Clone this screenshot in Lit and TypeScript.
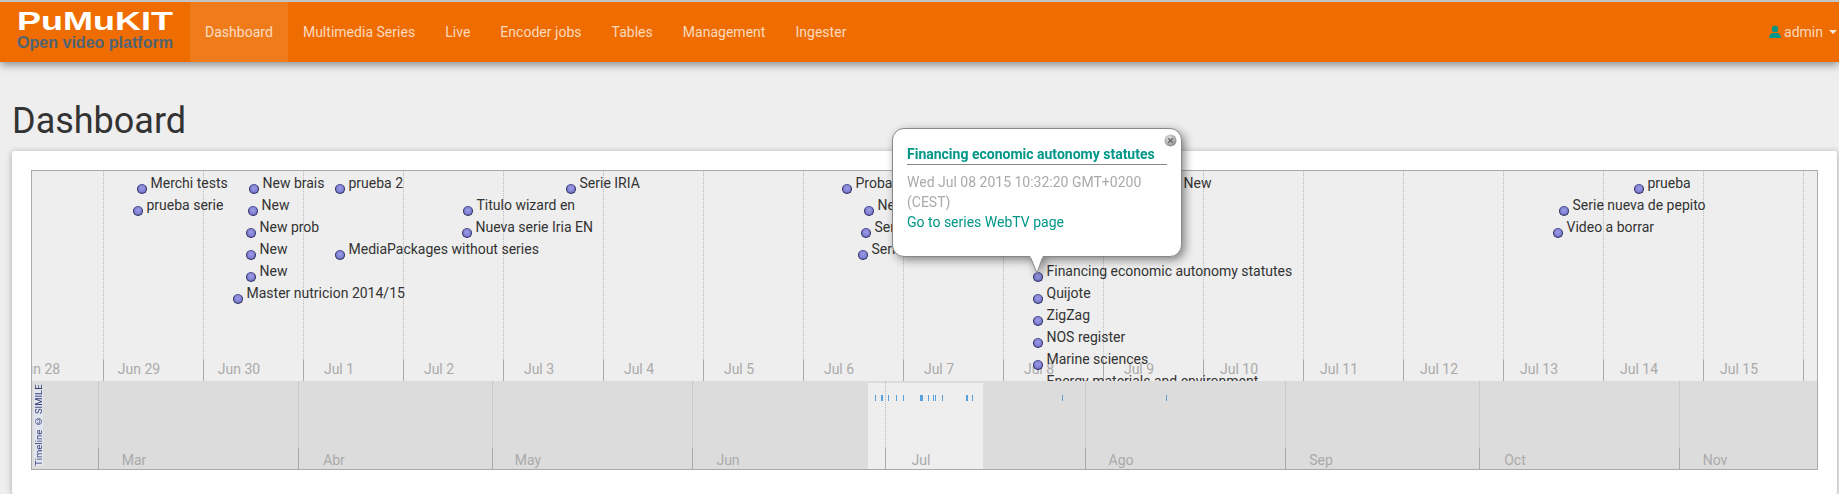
import { LitElement, html, css } from 'lit';
import { customElement } from 'lit/decorators.js';

// timeline inner box starts here on the page, all data below is in page coords
const ORIGIN_X = 32;
const ORIGIN_Y = 171;
const ROW_H = 22;

const navItems = ['Dashboard', 'Multimedia Series', 'Live', 'Encoder jobs', 'Tables', 'Management', 'Ingester'];

const days = ['Jun 28', 'Jun 29', 'Jun 30', 'Jul 1', 'Jul 2', 'Jul 3', 'Jul 4', 'Jul 5', 'Jul 6', 'Jul 7', 'Jul 8', 'Jul 9', 'Jul 10', 'Jul 11', 'Jul 12', 'Jul 13', 'Jul 14', 'Jul 15', ''];

const months = [
  { x: 98, label: 'Mar' },
  { x: 298, label: 'Abr' },
  { x: 492, label: 'May' },
  { x: 692, label: 'Jun' },
  { x: 885, label: 'Jul' },
  { x: 1085, label: 'Ago' },
  { x: 1285, label: 'Sep' },
  { x: 1479, label: 'Oct' },
  { x: 1679, label: 'Nov' },
];

const events = [
  { x: 142, r: 0, t: 'Merchi tests' },
  { x: 138, r: 1, t: 'prueba serie' },
  { x: 254, r: 0, t: 'New brais' },
  { x: 253, r: 1, t: 'New' },
  { x: 251, r: 2, t: 'New prob' },
  { x: 251, r: 3, t: 'New' },
  { x: 251, r: 4, t: 'New' },
  { x: 238, r: 5, t: 'Master nutricion 2014/15' },
  { x: 340, r: 0, t: 'prueba 2' },
  { x: 340, r: 3, t: 'MediaPackages without series' },
  { x: 468, r: 1, t: 'Titulo wizard en' },
  { x: 467, r: 2, t: 'Nueva serie Iria EN' },
  { x: 571, r: 0, t: 'Serie IRIA' },
  { x: 847, r: 0, t: 'Probando' },
  { x: 869, r: 1, t: 'New' },
  { x: 866, r: 2, t: 'Serie' },
  { x: 863, r: 3, t: 'Serie' },
  { x: 1175, r: 0, t: 'New' },
  { x: 1038, r: 4, t: 'Financing economic autonomy statutes' },
  { x: 1038, r: 5, t: 'Quijote' },
  { x: 1038, r: 6, t: 'ZigZag' },
  { x: 1038, r: 7, t: 'NOS register' },
  { x: 1038, r: 8, t: 'Marine sciences' },
  { x: 1038, r: 9, t: 'Energy materials and environment' },
  { x: 1639, r: 0, t: 'prueba' },
  { x: 1564, r: 1, t: 'Serie nueva de pepito' },
  { x: 1558, r: 2, t: 'Video a borrar' },
];

const marks = [
  { x: 875, w: 1 }, { x: 881, w: 2 }, { x: 888, w: 1 }, { x: 896, w: 1 }, { x: 903, w: 1 },
  { x: 920, w: 3 }, { x: 928, w: 1 }, { x: 933, w: 1 }, { x: 935, w: 1 }, { x: 942, w: 1 },
  { x: 966, w: 2 }, { x: 972, w: 1 }, { x: 1062, w: 1 }, { x: 1166, w: 1 },
];

@customElement('app-root')
export class AppRoot extends LitElement {
  static styles = css`
    :host {
      display: block;
      height: 494px;
      overflow: hidden;
      background: #eee;
      font-family: Roboto, sans-serif;
      font-size: 14px;
      line-height: 20px;
      color: #333;
    }

    .navbar {
      display: flex;
      height: 60px;
      border-top: 2px solid #c4c4c4;
      background: #ef6c00;
      box-shadow: 0 3px 8px rgba(0, 0, 0, 0.4);
      position: relative;
      z-index: 2;
    }

    .brand {
      width: 190px;
      box-sizing: border-box;
      padding: 8px 0 0 17px;
    }

    .brand svg {
      display: block;
    }

    .wordmark {
      font-family: "Liberation Sans", sans-serif;
      font-weight: 700;
      font-size: 25px;
      fill: #fff;
    }

    .tagline {
      font-family: "Liberation Sans", sans-serif;
      font-weight: 700;
      font-size: 16px;
      fill: #4f6475;
    }

    .nav-links {
      display: flex;
      letter-spacing: 0.02px;
    }

    .nav-link {
      padding: 20px 15px;
      color: rgba(255, 255, 255, 0.75);
    }

    .nav-link.active {
      background: rgba(255, 255, 255, 0.1);
    }

    .user {
      margin-left: auto;
      display: flex;
      align-items: center;
      gap: 2px;
      height: 60px;
      padding-right: 2px;
      color: rgba(255, 255, 255, 0.75);
    }

    .caret {
      width: 0;
      height: 0;
      margin-left: 4px;
      border-left: 4px solid transparent;
      border-right: 4px solid transparent;
      border-top: 4px solid rgba(255, 255, 255, 0.85);
    }

    .page {
      padding: 0 2px 0 12px;
    }

    h1 {
      margin: 0;
      padding: 39px 0 0;
      height: 50px;
      font-size: 36px;
      line-height: 40px;
      font-weight: 400;
      color: #333;
    }

    .card {
      background: #fff;
      padding: 19px 19px 24px;
      border-radius: 2px;
      box-shadow: 0 1px 6px rgba(0, 0, 0, 0.3);
    }

    .timeline-wrap {
      position: relative;
      width: 1787px;
    }

    .timeline {
      border: 1px solid #aaa;
      overflow: hidden;
    }

    .band {
      position: relative;
      overflow: hidden;
    }

    .band-top {
      height: 210px;
      background: #eee;
    }

    .band-bottom {
      height: 88px;
      background: #dcdcdc;
    }

    .grid-line {
      position: absolute;
      top: 0;
      bottom: 21px;
      border-left: 1px dotted #bbb;
    }

    .tick {
      position: absolute;
      bottom: 0;
      height: 21px;
      border-left: 1px solid #aaa;
    }

    .band-label {
      position: absolute;
      width: 72px;
      text-align: center;
      color: #aaa;
      white-space: nowrap;
    }

    .band-top .band-label {
      top: 188px;
    }

    .band-bottom .band-label {
      top: 69px;
    }

    .event {
      position: absolute;
      display: flex;
      align-items: flex-start;
      gap: 3.5px;
      white-space: nowrap;
    }

    .dot {
      box-sizing: border-box;
      width: 10px;
      height: 10px;
      margin-top: 11px;
      border-radius: 50%;
      border: 1px solid #2c2c62;
      border-top-color: #555596;
      background: radial-gradient(circle at 50% 40%, #9c9ce6 0, #8282d6 55%, #4c4c9c 100%);
    }

    .highlight {
      position: absolute;
      left: 836px;
      top: 2px;
      bottom: 0;
      width: 115px;
      background: #eee;
    }

    .mark {
      position: absolute;
      top: 14px;
      height: 6px;
      background: #58a0dc;
    }

    .credit {
      position: absolute;
      left: 2px;
      top: 9px;
      height: 76px;
      width: 9px;
      writing-mode: vertical-rl;
      transform: rotate(180deg);
      font-size: 9.5px;
      line-height: 9px;
      text-align: center;
      white-space: nowrap;
      color: #33407a;
      background: rgba(230, 232, 245, 0.7);
    }

    .popup {
      position: absolute;
      left: 861px;
      top: -42px;
      width: 290px;
      height: 129px;
      box-sizing: border-box;
      padding: 15px 14px 0;
      background: #fff;
      border: 1px solid #888;
      border-radius: 12px;
      filter: drop-shadow(3px 3px 5px rgba(0, 0, 0, 0.45));
    }

    .popup-title {
      margin: 0;
      border-bottom: 1px solid #888;
      font-size: 14px;
      font-weight: 700;
      line-height: 20px;
      color: #009688;
      white-space: nowrap;
    }

    .popup-body {
      margin-top: 7px;
      color: #aaa;
    }

    .popup-link {
      color: #009688;
    }

    .popup-close {
      position: absolute;
      right: 4px;
      top: 5px;
    }

    .popup-arrow {
      position: absolute;
      left: 136px;
      top: 126px;
    }
  `;

  render() {
    return html`
      <header class="navbar">
        <div class="brand">
          <svg width="160" height="44" viewBox="0 0 160 44">
            <text class="wordmark" x="0" y="20" textLength="156" lengthAdjust="spacingAndGlyphs">PuMuKIT</text>
            <text class="tagline" x="0" y="38" textLength="156" lengthAdjust="spacingAndGlyphs">Open video platform</text>
          </svg>
        </div>
        <nav class="nav-links">
          ${navItems.map((item, i) => html`<div class="nav-link ${i === 0 ? 'active' : ''}">${item}</div>`)}
        </nav>
        <div class="user">
          <svg width="14" height="14" viewBox="0 0 14 14">
            <circle cx="7" cy="4" r="3.2" fill="#009688"></circle>
            <path d="M1 13c0-3 2-5 4-5h4c2 0 4 2 4 5z" fill="#009688"></path>
          </svg>
          admin
          <span class="caret"></span>
        </div>
      </header>

      <main class="page">
        <h1>Dashboard</h1>
        <section class="card">
          <div class="timeline-wrap">
            <div class="timeline">
              <div class="band band-top">
                ${days.map((d, i) => {
                  const x = 3 + i * 100 - ORIGIN_X;
                  return html`
                    <div class="grid-line" style="left:${x}px"></div>
                    <div class="tick" style="left:${x}px"></div>
                    <div class="band-label" style="left:${x}px">${d}</div>
                  `;
                })}
                ${events.map((e) => html`
                  <div class="event" style="left:${e.x - 5 - ORIGIN_X}px;top:${189 + e.r * ROW_H - 16 - ORIGIN_Y}px">
                    <span class="dot"></span><span>${e.t}</span>
                  </div>
                `)}
              </div>
              <div class="band band-bottom">
                <div class="highlight"></div>
                ${months.map((m) => {
                  const x = m.x - ORIGIN_X;
                  return html`
                    <div class="grid-line" style="left:${x}px"></div>
                    <div class="tick" style="left:${x}px"></div>
                    <div class="band-label" style="left:${x}px">${m.label}</div>
                  `;
                })}
                ${marks.map((m) => html`<div class="mark" style="left:${m.x - ORIGIN_X}px;width:${m.w}px"></div>`)}
                <div class="credit">Timeline © SIMILE</div>
              </div>
            </div>

            <div class="popup">
              <h4 class="popup-title">Financing economic autonomy statutes</h4>
              <div class="popup-body">
                Wed Jul 08 2015 10:32:20 GMT+0200 (CEST)<br />
                <span class="popup-link">Go to series WebTV page</span>
              </div>
              <svg class="popup-close" width="13" height="13" viewBox="0 0 13 13">
                <defs>
                  <radialGradient id="ball" cx="40%" cy="35%" r="70%">
                    <stop offset="0" stop-color="#e8e8e8"></stop>
                    <stop offset="1" stop-color="#888"></stop>
                  </radialGradient>
                </defs>
                <circle cx="6.5" cy="6.5" r="6" fill="url(#ball)"></circle>
                <path d="M4.2 4.2l4.6 4.6M8.8 4.2l-4.6 4.6" stroke="#666" stroke-width="1.4"></path>
              </svg>
              <svg class="popup-arrow" width="16" height="19" viewBox="0 0 16 19">
                <path d="M1 1L8 18L14 1" fill="#fff" stroke="#888"></path>
                <rect x="1.5" y="0" width="12" height="3" fill="#fff"></rect>
              </svg>
            </div>
          </div>
        </section>
      </main>
    `;
  }
}
